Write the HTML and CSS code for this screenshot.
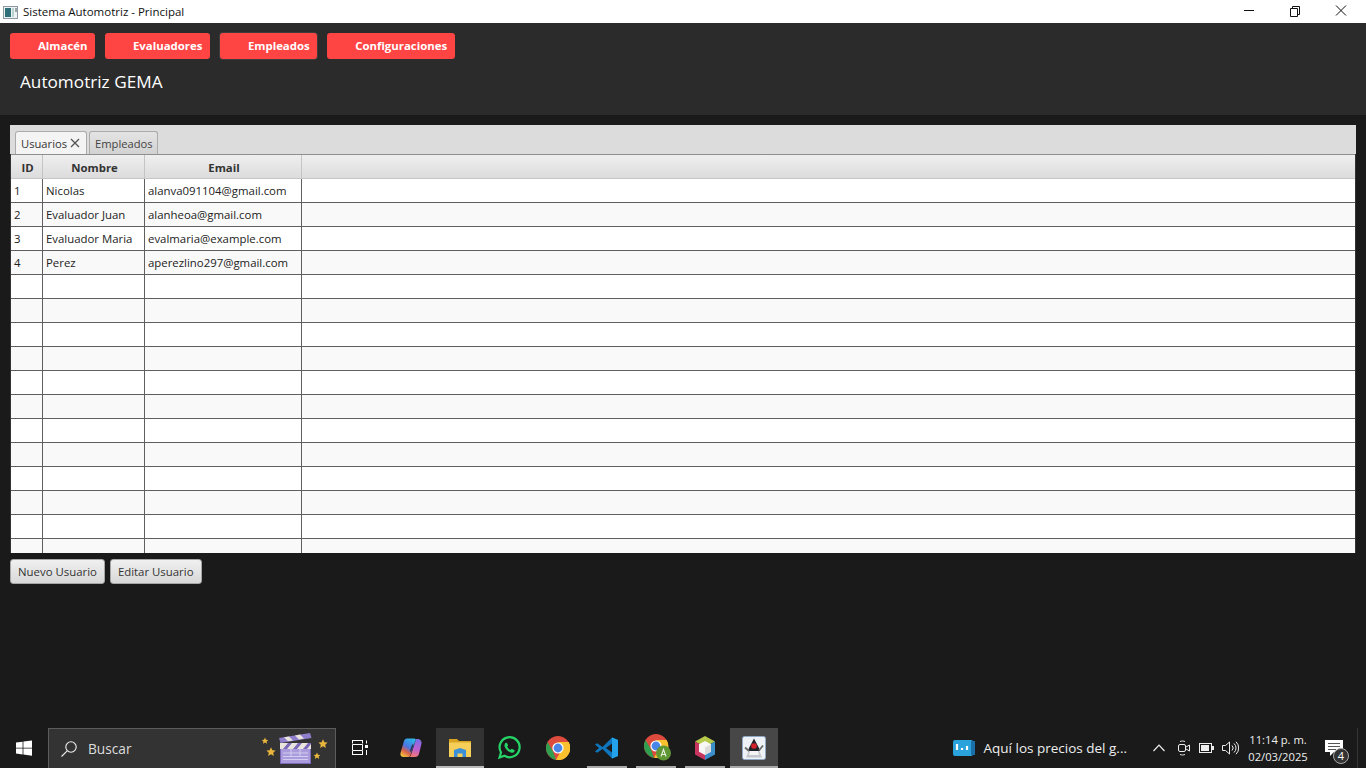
FILE: index.html
```html
<!DOCTYPE html>
<html lang="es">
<head>
<meta charset="utf-8">
<title>Sistema Automotriz - Principal</title>
<link rel="stylesheet" href="styles.css">
</head>
<body>
<div class="titlebar">
  <svg class="app-icon" width="16" height="16" viewBox="0 0 16 16"><rect x="1.500" y="2.500" width="14" height="12" fill="#eef1f1" stroke="#8d99a0"/><rect x="3" y="4" width="6" height="9" fill="#2f6f78"/><rect x="10" y="4" width="2" height="9" fill="#b9d4cf"/><rect x="13" y="4" width="2" height="4" fill="#9aa5a8"/></svg>
  <span class="title-text">Sistema Automotriz - Principal</span>
  <div class="win-controls">
    <svg class="win-btn" width="46" height="23" viewBox="0 0 46 23"><path d="M18 10.500h10" stroke="#111" fill="none"/></svg>
    <svg class="win-btn" width="46" height="23" viewBox="0 0 46 23"><path d="M18.500 8.500h7v8h-7zM20.500 8.500v-2h7v8h-2" stroke="#111" fill="none"/></svg>
    <svg class="win-btn" width="46" height="23" viewBox="0 0 46 23"><path d="M18 5.500l10 10M28 5.500l-10 10" stroke="#111" fill="none"/></svg>
  </div>
</div>

<header class="top-panel">
  <nav class="menu">
    <button class="menu-btn">Almacén</button>
    <button class="menu-btn">Evaluadores</button>
    <button class="menu-btn menu-btn-focus">Empleados</button>
    <button class="menu-btn">Configuraciones</button>
  </nav>
  <div class="brand">Automotriz GEMA</div>
</header>

<main class="content">
  <section class="tabpane">
    <div class="tabs">
      <div class="tab tab-active">Usuarios <svg class="tab-close" width="10" height="10" viewBox="0 0 10 10"><path d="M1 1l8 8M9 1l-8 8" stroke="#555" stroke-width="1.300" fill="none"/></svg></div>
      <div class="tab">Empleados</div>
    </div>
    <div class="table">
      <div class="row head"><div class="cell c-id">ID</div><div class="cell c-name">Nombre</div><div class="cell c-mail">Email</div><div class="cell c-rest"></div></div>
      <div class="body">
        <div class="row"><div class="cell c-id">1</div><div class="cell c-name">Nicolas</div><div class="cell c-mail">alanva091104@gmail.com</div><div class="cell c-rest"></div></div>
        <div class="row odd"><div class="cell c-id">2</div><div class="cell c-name">Evaluador Juan</div><div class="cell c-mail">alanheoa@gmail.com</div><div class="cell c-rest"></div></div>
        <div class="row"><div class="cell c-id">3</div><div class="cell c-name">Evaluador Maria</div><div class="cell c-mail">evalmaria@example.com</div><div class="cell c-rest"></div></div>
        <div class="row odd"><div class="cell c-id">4</div><div class="cell c-name">Perez</div><div class="cell c-mail">aperezlino297@gmail.com</div><div class="cell c-rest"></div></div>
        <div class="row"><div class="cell c-id"></div><div class="cell c-name"></div><div class="cell c-mail"></div><div class="cell c-rest"></div></div>
        <div class="row odd"><div class="cell c-id"></div><div class="cell c-name"></div><div class="cell c-mail"></div><div class="cell c-rest"></div></div>
        <div class="row"><div class="cell c-id"></div><div class="cell c-name"></div><div class="cell c-mail"></div><div class="cell c-rest"></div></div>
        <div class="row odd"><div class="cell c-id"></div><div class="cell c-name"></div><div class="cell c-mail"></div><div class="cell c-rest"></div></div>
        <div class="row"><div class="cell c-id"></div><div class="cell c-name"></div><div class="cell c-mail"></div><div class="cell c-rest"></div></div>
        <div class="row odd"><div class="cell c-id"></div><div class="cell c-name"></div><div class="cell c-mail"></div><div class="cell c-rest"></div></div>
        <div class="row"><div class="cell c-id"></div><div class="cell c-name"></div><div class="cell c-mail"></div><div class="cell c-rest"></div></div>
        <div class="row odd"><div class="cell c-id"></div><div class="cell c-name"></div><div class="cell c-mail"></div><div class="cell c-rest"></div></div>
        <div class="row"><div class="cell c-id"></div><div class="cell c-name"></div><div class="cell c-mail"></div><div class="cell c-rest"></div></div>
        <div class="row odd"><div class="cell c-id"></div><div class="cell c-name"></div><div class="cell c-mail"></div><div class="cell c-rest"></div></div>
        <div class="row"><div class="cell c-id"></div><div class="cell c-name"></div><div class="cell c-mail"></div><div class="cell c-rest"></div></div>
        <div class="row odd"><div class="cell c-id"></div><div class="cell c-name"></div><div class="cell c-mail"></div><div class="cell c-rest"></div></div>
      </div>
    </div>
  </section>
  <div class="actions">
    <button class="action-btn">Nuevo Usuario</button>
    <button class="action-btn">Editar Usuario</button>
  </div>
</main>

<footer class="taskbar">
  <div class="start">
    <svg width="18" height="16" viewBox="0 0 18 16"><path fill="#fff" d="M1 2.600l6.600-.9v6H1zM8.400 1.600L17 .4v7.300H8.400zM1 8.500h6.600v6L1 13.600zM8.400 8.500H17v7.200l-8.600-1.200z"/></svg>
  </div>
  <div class="search">
    <svg class="search-icon" width="18" height="18" viewBox="0 0 18 18"><circle cx="11" cy="7" r="5.200" fill="none" stroke="#eee" stroke-width="1.100"/><path d="M7.200 10.800L1.500 16.500" stroke="#eee" stroke-width="1.100" fill="none"/></svg>
    <span class="search-text">Buscar</span>
    <svg class="search-art" width="72" height="34" viewBox="0 0 72 34">
      <defs>
        <path id="star" fill="#e8b63c" d="M0-1L.29-.36.95-.31.47.15.59.81 0 .45-.59.81-.47.15-.95-.31-.29-.36z"/>
      </defs>
      <use href="#star" transform="translate(5 9) scale(3.400)"/>
      <use href="#star" transform="translate(11 20) scale(4.800)"/>
      <use href="#star" transform="translate(63 12) scale(4.800)"/>
      <use href="#star" transform="translate(57 24) scale(3.600)"/>
      <rect x="20.500" y="16.500" width="30" height="15" fill="#a99bdc" stroke="#7a67b8"/>
      <path d="M23 21h25M23 24.500h25M23 27.500h25M31 17v7M40 17v7" stroke="#d4cdf0" fill="none"/>
      <rect x="20" y="11" width="31" height="6" fill="#e9e4dc"/>
      <path d="M23 17l5-6h4l-5 6zM33 17l5-6h4l-5 6zM43 17l5-6h3v1l-4 5z" fill="#7c68b8"/>
      <path d="M19 6l31-5 1.500 5-31 5z" fill="#8f7ecb"/>
      <path d="M24 5.200l4 4 5-.8-4-4zM35 3.400l4 4 5-.8-4-4z" fill="#e9e4dc"/>
    </svg>
  </div>
  <div class="task-item">
    <svg width="18" height="16" viewBox="0 0 18 16"><path d="M1 .5h11M1.500.5v3M11.500.5v3M1.500 4.500h10v6h-10zM1 14.500h11M1.500 11v3.500M11.500 11v3.500" fill="none" stroke="#fff"/><rect x="14" y="5" width="3" height="3" fill="#fff"/><path d="M15.500 .5v3M15.500 10v5" stroke="#fff" fill="none"/></svg>
  </div>
  <div class="task-icons">
    <div class="app">
      <svg width="24" height="24" viewBox="0 0 24 24"><defs><linearGradient id="cp1" x1=".7" y1="0" x2=".2" y2="1"><stop offset="0" stop-color="#2fb5e8"/><stop offset=".45" stop-color="#4a74e4"/><stop offset=".7" stop-color="#d9604c"/><stop offset="1" stop-color="#f5c63c"/></linearGradient><linearGradient id="cp2" x1=".6" y1="0" x2=".4" y2="1"><stop offset="0" stop-color="#7c6ee6"/><stop offset=".55" stop-color="#c05fd0"/><stop offset="1" stop-color="#f07a70"/></linearGradient></defs><path fill="url(#cp2)" d="M15 3h3.500c2.500 0 4.500 2 4 4.500L20 18c-.5 2-2 3-4 3H9c1.500 0 2.400-.5 3-2l4.500-14c.4-1 0-2-1.500-2z"/><path fill="url(#cp1)" d="M8 2.500h7c1.500 0 2 1 1.500 2L11.500 19c-.6 1.500-1.500 2-3 2h-4C2 21 1 19 1.500 17L5 5c.4-1.500 1.500-2.500 3-2.500z"/><path d="M14 8.500l-2.500 7" stroke="#1a1a1a" stroke-width="1.600" opacity=".7" fill="none"/></svg>
    </div>
    <div class="app app-open">
      <svg width="24" height="24" viewBox="0 0 24 24"><path fill="#d9a520" d="M1 3h8l2 2h12v3H1z"/><path fill="#f6cf5a" d="M1 6.500h22V21H1z"/><path fill="#3a8fd8" d="M6 14l6-2 6 2v7h-3.500v-3.500h-5V21H6z"/></svg>
    </div>
    <div class="app">
      <svg width="24" height="24" viewBox="0 0 24 24"><path fill="none" stroke="#25d366" stroke-width="2.200" d="M2.500 21.500l1.500-5.200A10 10 0 1 1 7.500 19.800z"/><path fill="#25d366" d="M8.500 7c.5-.5 1.200-.5 1.500 0l1 2c.2.4 0 .8-.8 1.700.8 1.500 1.900 2.500 3.300 3.200.9-1 1.200-1.200 1.700-1l2 1c.5.3.5 1 .2 1.600-.6 1.200-2.200 1.500-3.500 1.100-3-1-5.300-3.200-6.300-6C7.200 9 7.600 7.800 8.500 7z"/></svg>
    </div>
    <div class="app">
      <svg width="24" height="24" viewBox="0 0 24 24"><circle cx="12" cy="12" r="12" fill="#dd4b3e"/><path fill="#fbc02d" d="M12 6h10.700A12 12 0 0 1 10 23.800L15.500 14z"/><path fill="#2f9e4f" d="M1.600 6L7 15.500 10 23.800A12 12 0 0 1 1.600 6z"/><circle cx="12" cy="12" r="5.600" fill="#fff"/><circle cx="12" cy="12" r="4.400" fill="#4a86e8"/></svg>
    </div>
    <div class="app app-run">
      <svg width="24" height="24" viewBox="0 0 24 24"><path fill="#0f75bc" d="M0 8.500l2.200-1.300 5.300 3.800L17 1.500l6 2.600v15.800l-6 2.600-9.500-9.500-5.300 3.800L0 15.500 4 12z"/><path fill="#23a4ea" d="M17 1.500l6 2.600v15.800l-6 2.600z"/><path fill="#1a1a1a" d="M11 12l6-4.500v9z"/></svg>
    </div>
    <div class="app app-run">
      <svg class="chrome-badge" width="28" height="28" viewBox="0 0 28 28"><circle cx="12" cy="12" r="12" fill="#dd4b3e"/><path fill="#fbc02d" d="M12 6h10.700A12 12 0 0 1 10 23.800L15.500 14z"/><path fill="#2f9e4f" d="M1.600 6L7 15.500 10 23.800A12 12 0 0 1 1.600 6z"/><circle cx="12" cy="12" r="5.600" fill="#fff"/><circle cx="12" cy="12" r="4.400" fill="#4a86e8"/><circle cx="19.500" cy="19" r="7.500" fill="#5f9634"/><path d="M17 22.500l2.500-7 2.500 7M18 20.500h3" stroke="#e7f0dc" stroke-width="1.100" fill="none"/></svg>
    </div>
    <div class="app app-run">
      <svg width="24" height="24" viewBox="0 0 24 24"><path fill="#b7c94a" d="M12 0l10 5.500L12 11 2 5.500z"/><path fill="#c8365f" d="M2 5.500L12 11v13L2 18.500z"/><path fill="#3b8ec9" d="M22 5.500L12 11v13l10-5.500z"/><path fill="#f7f7f5" d="M12 5l6 3.200v7.600L12 19l-6-3.200V8.200z"/><path fill="#dcdcda" d="M12 11.500l6-3.300v7.600L12 19z"/></svg>
    </div>
    <div class="app app-focus">
      <svg width="24" height="24" viewBox="0 0 24 24"><rect x=".5" y=".5" width="23" height="23" rx="2" fill="#eef2f6" stroke="#8fa8c4"/><path fill="#c4c8cc" d="M7 14h10l3 7.500H4z"/><path fill="#22222a" d="M12 2.500l5 9.500 1 3H6l1-3z"/><circle cx="12" cy="10" r="2.800" fill="#d6232b"/><path d="M3 11.500l4 3.500M21 9.500l-4 5" stroke="#6a6a6a" stroke-width="1.800" fill="none"/><path fill="#f4f4f4" d="M8 15h8l1 4H7z"/></svg>
    </div>
  </div>
  <div class="tray">
    <div class="news">
      <svg width="22" height="16" viewBox="0 0 22 16"><rect x="0" y="0" width="20" height="16" rx="2" fill="#2aa3dc"/><rect x="18" y="1" width="4" height="14" fill="#1a6fa8"/><path d="M4 4v6M9 8v2M14 6v4" stroke="#fff" stroke-width="2.200" fill="none"/></svg>
      <span class="news-text">Aquí los precios del g...</span>
    </div>
    <svg class="tray-ico chev" width="12" height="8" viewBox="0 0 12 8"><path d="M.5 7L6 1.200 11.500 7" stroke="#eee" stroke-width="1.200" fill="none"/></svg>
    <svg class="tray-ico cam" width="12" height="18" viewBox="0 0 12 18"><path d="M2 2.500A6 6 0 0 1 7 2.500M2 15.500a6 6 0 0 0 5 0" stroke="#ddd" fill="none"/><rect x=".5" y="5.500" width="7" height="7" rx="1.500" fill="none" stroke="#eee"/><path d="M8 8l3.500-2v6L8 10" fill="none" stroke="#eee"/></svg>
    <svg class="tray-ico" width="15" height="10" viewBox="0 0 15 10"><rect x=".5" y=".5" width="12" height="9" fill="none" stroke="#eee"/><rect x="2" y="2" width="8" height="6" fill="#eee"/><rect x="13" y="3" width="2" height="4" fill="#eee"/></svg>
    <svg class="tray-ico vol" width="17" height="14" viewBox="0 0 17 14"><path d="M.5 4.500h3L7.500 1v12l-4-3.500h-3z" fill="none" stroke="#eee"/><path d="M10 4.500a3.500 3.500 0 0 1 0 5M12 2.500a6 6 0 0 1 0 9M14 .8a8.500 8.500 0 0 1 0 12.400" fill="none" stroke="#eee"/></svg>
    <div class="clock"><span>11:14 p. m.</span><span>02/03/2025</span></div>
    <div class="notif">
      <svg width="18" height="16" viewBox="0 0 18 16"><path fill="#fff" d="M0 0h18v12H9l-4 4v-4H0z"/><path d="M3 3.500h12M3 6.500h12M3 9.500h8" stroke="#555" fill="none"/></svg>
      <span class="badge">4</span>
    </div>
  </div>
</footer>
</body>
</html>
```

FILE: styles.css
```css
* { box-sizing: border-box; }
html, body { height: 100%; }
body {
  margin: 0;
  height: 768px;
  overflow: hidden;
  display: flex;
  flex-direction: column;
  background: #1a1a1a;
  font-family: "Open Sans", "Noto Sans", "Liberation Sans", sans-serif;
}

/* window title bar */
.titlebar {
  height: 23px;
  flex: none;
  background: #fff;
  display: flex;
  align-items: center;
  padding-left: 2px;
}
.app-icon { flex: none; }
.title-text { margin-left: 5px; font-size: 11.5px; color: #111; }
.win-controls { margin-left: auto; display: flex; padding-right: 2px; }
.win-btn { display: block; }

/* red menu panel */
.top-panel {
  height: 92px;
  flex: none;
  background: #2b2b2b;
  padding: 10px 10px 0;
}
.menu { display: flex; gap: 10px; }
.menu-btn {
  height: 26px;
  padding: 0 7.500px 2px 28px;
  border: 0;
  border-radius: 3px;
  background: #ff4444;
  color: #fff;
  font: 700 11.4px "Open Sans", sans-serif;
}
.menu-btn-focus { box-shadow: 0 0 0 1px #3c3c3c; }
.brand { margin: 11px 0 0 10px; font-size: 17.200px; line-height: 24px; color: #fff; }

/* main content */
.content { flex: 1; min-height: 0; padding: 10px 10px 0; }
.tabpane {
  height: 428px;
  display: flex;
  flex-direction: column;
  background: #dcdcdc;
  overflow: hidden;
}
.tabs {
  height: 29px;
  flex: none;
  display: flex;
  align-items: flex-end;
  gap: 2px;
  padding: 0 0 0 5px;
  background: #dcdcdc;
}
.tab {
  height: 23px;
  padding: 0 4px 0 5px;
  display: flex;
  align-items: center;
  gap: 3px;
  font-size: 11.2px;
  color: #444;
  background: linear-gradient(#e4e4e4, #d2d2d2);
  border: 1px solid #ababab;
  border-bottom: 0;
  border-radius: 3px 3px 0 0;
}
.tab-active { background: #f4f4f4; color: #333; }
.tab-close { margin-right: 2px; }

.table {
  flex: 1;
  min-height: 0;
  display: flex;
  flex-direction: column;
  background: #fff;
  border: 1px solid #333;
  border-width: 0 1px;
  box-shadow: inset 0 1px 0 #8e8e8e;
  padding-top: 1px;
}
.row { height: 24px; display: flex; flex: none; background: #fff; border-bottom: 1px solid #5f5f5f; }
.row.odd { background: #f9f9f9; }
.row.head {
  height: 24px;
  background: linear-gradient(#efefef, #dcdcdc);
  border-bottom: 1px solid #c6c6c6;
}
.body { flex: 1; min-height: 0; overflow: hidden; }
.cell {
  flex: none;
  display: flex;
  align-items: center;
  padding-left: 3px;
  font-size: 11.400px;
  color: #222;
  border-right: 1px solid #5f5f5f;
}
.c-id { width: 32px; }
.c-name { width: 102px; }
.c-mail { width: 157px; }
.c-rest { flex: 1; border-right: 0; }
.head .cell {
  justify-content: center;
  padding: 2px 0 0 2px;
  font-weight: 700;
  color: #333;
  border-right: 1px solid #c4c4c4;
}
.head .c-rest { border-right: 0; }

.actions { display: flex; gap: 5px; padding-top: 6px; }
.action-btn {
  height: 25px;
  padding: 0 7px;
  border: 1px solid #a6a6a6;
  border-radius: 3px;
  background: linear-gradient(#f0f0f0, #d8d8d8);
  color: #333;
  font: 11.4px "Open Sans", sans-serif;
}

/* Windows task bar */
.taskbar { height: 40px; flex: none; display: flex; align-items: stretch; background: #1a1a1a; color: #fff; }
.start { width: 48px; display: flex; align-items: center; justify-content: center; }
.search {
  width: 288px;
  display: flex;
  align-items: center;
  background: #333;
  border: 1px solid #5c5c5c;
  border-bottom: 0;
  padding-left: 11px;
}
.search-text { margin-left: 10px; font-size: 13.7px; color: #ddd; }
.search-art { margin-left: auto; margin-right: 3px; }
.task-item { width: 48px; display: flex; align-items: center; justify-content: center; }
.task-icons { display: flex; gap: 1px; margin-left: 3px; }
.app {
  width: 48px;
  display: flex;
  align-items: center;
  justify-content: center;
  position: relative;
}
.chrome-badge { margin-left: 4px; }
.app-open { background: #333; box-shadow: inset 0 -2px 0 #bbb; }
.app-focus { background: #474747; box-shadow: inset 0 -2px 0 #a8a8a8; }
.app-run::after {
  content: "";
  position: absolute;
  left: 4px; right: 4px; bottom: 0;
  height: 2px;
  background: #aaa;
}
.tray { margin-left: auto; display: flex; align-items: center; padding-right: 8px; }
.news { display: flex; align-items: center; gap: 9px; margin-right: 26px; }
.news-text { font-size: 13.5px; color: #eee; }
.tray-ico { display: block; margin-right: 8px; }
.tray-ico.chev { margin-right: 13px; }
.tray-ico.cam { margin-right: 9px; }
.tray-ico.vol { margin-right: 3px; }
.clock {
  width: 72px;
  display: flex;
  flex-direction: column;
  align-items: center;
  gap: 2px;
  font-size: 11.2px;
  line-height: 15px;
  color: #eee;
}
.notif {
  width: 44px;
  height: 100%;
  position: relative;
  display: flex;
  align-items: center;
  justify-content: center;
  padding-right: 4px;
  border-right: 1px solid #333;
}
.badge {
  position: absolute;
  left: 19px; top: 20px;
  width: 16px; height: 16px;
  border-radius: 50%;
  background: #333;
  border: 1px solid #aaa;
  font-size: 11px;
  line-height: 14px;
  text-align: center;
  color: #fff;
}
```
